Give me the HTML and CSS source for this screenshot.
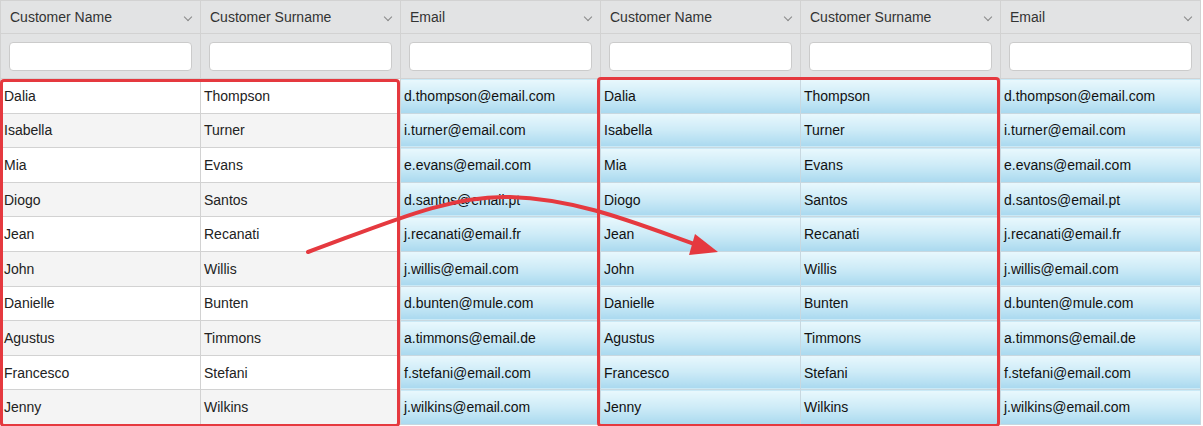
FILE: index.html
```html
<!DOCTYPE html>
<html>
<head>
    <title>Customers</title>
    <link rel="stylesheet" href="styles.css">
</head>
<body>
    <div class="grid-wrap">
        <table class="grid">
            <thead>
                <tr class="head-row">
                    <th>Customer Name<span class="chev"></span></th>
                    <th>Customer Surname<span class="chev"></span></th>
                    <th>Email<span class="chev"></span></th>
                    <th>Customer Name<span class="chev"></span></th>
                    <th>Customer Surname<span class="chev"></span></th>
                    <th>Email<span class="chev"></span></th>
                </tr>
                <tr class="filter-row">
                    <th><input type="text"></th>
                    <th><input type="text"></th>
                    <th><input type="text"></th>
                    <th><input type="text"></th>
                    <th><input type="text"></th>
                    <th><input type="text"></th>
                </tr>
            </thead>
            <tbody id="rows"></tbody>
        </table>

        <div class="mark mark-left"></div>
        <div class="mark mark-right"></div>

        <svg class="arrow" width="1203" height="426" viewBox="0 0 1203 426">
            <path d="M308,252 C390,222 450,195 510,197 C580,199 640,225 700,246" fill="none" stroke="#e5393f" stroke-width="4" stroke-linecap="round"/>
            <polygon points="718,252 695,234 689,255" fill="#e5393f"/>
        </svg>
    </div>

    <script>
        var customers = [
            ['Dalia', 'Thompson', 'd.thompson@email.com'],
            ['Isabella', 'Turner', 'i.turner@email.com'],
            ['Mia', 'Evans', 'e.evans@email.com'],
            ['Diogo', 'Santos', 'd.santos@email.pt'],
            ['Jean', 'Recanati', 'j.recanati@email.fr'],
            ['John', 'Willis', 'j.willis@email.com'],
            ['Danielle', 'Bunten', 'd.bunten@mule.com'],
            ['Agustus', 'Timmons', 'a.timmons@email.de'],
            ['Francesco', 'Stefani', 'f.stefani@email.com'],
            ['Jenny', 'Wilkins', 'j.wilkins@email.com']
        ];

        var html = '';
        customers.forEach(function(c, i) {
            var cls = i % 2 === 1 ? 'row alt' : 'row';
            html += '<tr class="' + cls + '">';
            html += '<td class="plain">' + c[0] + '</td>';
            html += '<td class="plain">' + c[1] + '</td>';
            html += '<td class="sel">' + c[2] + '</td>';
            html += '<td class="sel">' + c[0] + '</td>';
            html += '<td class="sel">' + c[1] + '</td>';
            html += '<td class="sel">' + c[2] + '</td>';
            html += '</tr>';
        });
        document.getElementById('rows').innerHTML = html;
    </script>
</body>
</html>
```

FILE: styles.css
```css
body {
    margin: 0;
    padding: 0;
    font-family: "Liberation Sans", Arial, sans-serif;
    font-size: 14px;
    color: #222;
    background-color: #fff;
    overflow: hidden;
}

.grid-wrap {
    position: relative;
    width: 1203px;
    height: 426px;
    overflow: hidden;
}

.grid {
    border-collapse: collapse;
    table-layout: fixed;
    width: 1201px;
}

.grid th,
.grid td {
    border: 1px solid #d2d2d2;
    padding: 0;
    text-align: left;
    font-weight: normal;
    white-space: nowrap;
    overflow: hidden;
}

.head-row th {
    height: 32px;
    padding: 0 9px;
    background-color: #e2e3e4;
    color: #333;
    position: relative;
}

.chev {
    position: absolute;
    right: 9px;
    top: 13px;
    width: 5px;
    height: 5px;
    border-right: 1px solid #888;
    border-bottom: 1px solid #888;
    transform: rotate(45deg);
}

.filter-row th {
    height: 44px;
    padding: 0 8px;
    background-color: #e2e3e4;
}

.filter-row input {
    display: block;
    box-sizing: border-box;
    width: 100%;
    height: 29px;
    border: 1px solid #cbcbcb;
    border-radius: 4px;
    background-color: #fff;
    margin-top: 1px;
}

.row td {
    height: 33.6px;
    padding: 0 3px;
}

.row .plain {
    background-color: #fff;
}

.row.alt .plain {
    background-color: #f4f4f4;
}

.row .sel {
    background: linear-gradient(to bottom, #e9f8fd 0%, #cdebf7 50%, #aad9ef 100%);
    border-color: #c8d8e0;
    color: #111;
}

.mark {
    position: absolute;
    border: 3px solid #e5393f;
    border-radius: 4px;
    box-sizing: border-box;
}

.mark-left {
    left: 0;
    top: 79px;
    width: 400px;
    height: 348px;
}

.mark-right {
    left: 597px;
    top: 77px;
    width: 403px;
    height: 350px;
}

.arrow {
    position: absolute;
    left: 0;
    top: 0;
    pointer-events: none;
}
```
